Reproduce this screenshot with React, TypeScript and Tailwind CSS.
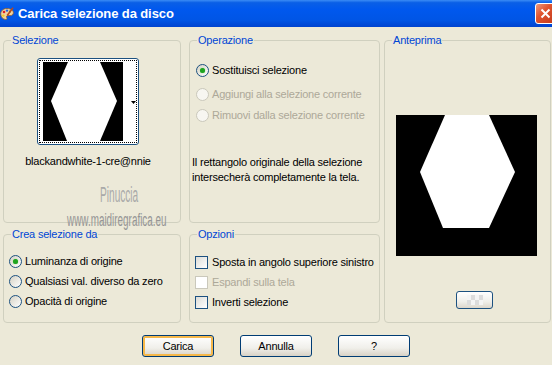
import type { ReactNode } from "react";

function Radio({ checked, disabled }: { checked?: boolean; disabled?: boolean }) {
  return (
    <span
      className={`w-[13px] h-[13px] shrink-0 rounded-full border flex items-center justify-center ${
        disabled ? "border-[#cac8bb] bg-[#f7f6f1]" : "border-[#1c5180] bg-[linear-gradient(135deg,#d6d2c4,#ffffff)]"
      }`}
    >
      {checked && <span className="w-[5px] h-[5px] rounded-full bg-[#1fa31f] shadow-[0_0_1px_#5bd35b]" />}
    </span>
  );
}

function Check({ disabled }: { disabled?: boolean }) {
  return (
    <span
      className={`w-[13px] h-[13px] shrink-0 border ${
        disabled ? "border-[#cac8bb] bg-white" : "border-[#1c5180] bg-[linear-gradient(135deg,#dcdcd7,#ffffff)]"
      }`}
    />
  );
}

function Group({ title, className, children }: { title: string; className: string; children?: ReactNode }) {
  return (
    <fieldset className={`border border-[#d0d0bf] rounded-[4px] min-w-0 ${className}`}>
      <legend className="ml-[7px] px-[1px] text-[#0046d5] leading-[13px]">{title}</legend>
      {children}
    </fieldset>
  );
}

function XpButton({ label, isDefault }: { label: string; isDefault?: boolean }) {
  return (
    <button
      className={`w-[72px] h-[22px] rounded-[3px] border border-[#003c74] bg-[linear-gradient(to_bottom,#ffffff,#f0efea_60%,#d8d2c6)] text-black leading-none ${
        isDefault ? "shadow-[inset_0_0_0_2px_#f6b84a]" : ""
      }`}
    >
      {label}
    </button>
  );
}

export default function App() {
  return (
    <div className="w-[552px] h-[365px] overflow-hidden bg-[#ece9d8] flex flex-col font-['Liberation_Sans',Tahoma,sans-serif] text-[11px] tracking-[-0.2px] whitespace-nowrap text-black">
      {/* title bar */}
      <div className="h-[27px] shrink-0 flex items-center bg-[linear-gradient(to_bottom,#3b8cf5_0%,#0a5fe6_10%,#0058ee_35%,#0055e5_75%,#0043cf_100%)]">
        <svg width="14" height="14" viewBox="0 0 14 14">
          <path d="M7 1.5C3.3 1.5.7 3.8.7 7c0 3 2.4 5.5 5 5.5 1.4 0 1.6-1.1 1-1.9-.6-.9 0-2 1.2-2h2.2c2 0 3.3-1.2 3.3-2.9C13.4 3.4 10.5 1.5 7 1.5z" fill="#f1d3a1" stroke="#8a5a2a" strokeWidth=".8" />
          <circle cx="4" cy="5" r="1.3" fill="#e02424" />
          <circle cx="7" cy="3.6" r="1.2" fill="#2462e0" />
          <circle cx="3.4" cy="8.6" r="1.2" fill="#f0cf1c" />
          <circle cx="10" cy="4.6" r="1.1" fill="#26a226" />
          <path d="M13 .8 7.2 8.6" stroke="#b8481a" strokeWidth="1.6" />
        </svg>
        <span className="ml-[4px] text-white font-bold text-[13px] tracking-[-0.1px]">Carica selezione da disco</span>
        <div className="ml-auto -mr-[4px] w-[21px] h-[21px] rounded-[3px] border border-white bg-[linear-gradient(135deg,#ec9a80,#e0542f_40%,#c2391b)] flex items-center justify-center">
          <svg width="11" height="11" viewBox="0 0 11 11">
            <path d="M1.5 1.5l8 8M9.5 1.5l-8 8" stroke="#fff" strokeWidth="2" />
          </svg>
        </div>
      </div>

      {/* body */}
      <div className="relative flex-1 pt-[7px] pl-[3px]">
        <div className="flex">
          <div className="flex flex-col gap-[5px] w-[178px]">
            <Group title="Selezione" className="h-[189px]">
              <div className="flex flex-col items-center pr-[8px]">
                <div className="mt-[11px] w-[102px] h-[87px] rounded-[3px] border border-[#1c5180] bg-white flex">
                  <div className="m-[1px] flex-1 border border-dotted border-black flex items-start pl-[3px] pt-[1px]">
                    <svg width="80" height="79" viewBox="0 0 80 79">
                      <rect width="80" height="79" fill="#000" />
                      <polygon points="25,0 57,0 74,39 57,79 24,79 8,39" fill="#fff" />
                    </svg>
                    <div className="flex-1 self-stretch flex items-center justify-end">
                      <svg width="5" height="3" viewBox="0 0 5 3">
                        <polygon points="0,0 5,0 2.5,3" fill="#000" />
                      </svg>
                    </div>
                  </div>
                </div>
                <div className="mt-[10px] leading-[13px]">blackandwhite-1-cre@nnie</div>
              </div>
            </Group>
            <Group title="Crea selezione da" className="h-[95px]">
              <div className="mt-[10px] flex flex-col pl-[5px]">
                <div className="h-[20px] flex items-center">
                  <Radio checked />
                  <span className="ml-[3px]">Luminanza di origine</span>
                </div>
                <div className="h-[20px] flex items-center">
                  <Radio />
                  <span className="ml-[3px]">Qualsiasi val. diverso da zero</span>
                </div>
                <div className="h-[20px] flex items-center">
                  <Radio />
                  <span className="ml-[3px]">Opacità di origine</span>
                </div>
              </div>
            </Group>
          </div>

          <div className="ml-[8px] flex flex-col gap-[5px] w-[191px]">
            <Group title="Operazione" className="h-[189px]">
              <div className="pl-[6px] flex flex-col">
                <div className="mt-[13px] h-[20px] flex items-center">
                  <Radio checked />
                  <span className="ml-[3px]">Sostituisci selezione</span>
                </div>
                <div className="mt-[4px] h-[20px] flex items-center text-[#aca899]">
                  <Radio disabled />
                  <span className="ml-[3px]">Aggiungi alla selezione corrente</span>
                </div>
                <div className="mt-[1px] h-[20px] flex items-center text-[#aca899]">
                  <Radio disabled />
                  <span className="ml-[3px]">Rimuovi dalla selezione corrente</span>
                </div>
              </div>
              <p className="mt-[30px] pl-[2px] leading-[15px]">
                Il rettangolo originale della selezione
                <br />
                intersecherà completamente la tela.
              </p>
            </Group>
            <Group title="Opzioni" className="h-[95px]">
              <div className="mt-[11px] flex flex-col pl-[5px]">
                <div className="h-[20px] flex items-center">
                  <Check />
                  <span className="ml-[4px]">Sposta in angolo superiore sinistro</span>
                </div>
                <div className="h-[20px] flex items-center text-[#aca899]">
                  <Check disabled />
                  <span className="ml-[4px]">Espandi sulla tela</span>
                </div>
                <div className="h-[20px] flex items-center">
                  <Check />
                  <span className="ml-[4px]">Inverti selezione</span>
                </div>
              </div>
            </Group>
          </div>

          <Group title="Anteprima" className="ml-[4px] w-[167px] h-[289px]">
            <div className="mt-[68px] ml-[11px]">
              <svg width="141" height="141" viewBox="0 0 141 141" className="block">
                <rect width="141" height="141" fill="#000" />
                <polygon points="49,0 93,0 119,57 93,113 47,113 24,57" fill="#fff" />
              </svg>
            </div>
            <div className="mt-[35px] ml-[71px] w-[37px] h-[18px] rounded-[3px] border border-[#1c5180] bg-[linear-gradient(to_bottom,#ffffff,#f0efea_60%,#dcd6cb)] flex items-center justify-center">
              <svg width="16" height="10" viewBox="0 0 16 10">
                <rect width="16" height="10" fill="#f4f4f4" />
                <rect x="4" y="0" width="4" height="5" fill="#dcdcdc" />
                <rect x="12" y="0" width="4" height="5" fill="#dcdcdc" />
                <rect x="0" y="5" width="4" height="5" fill="#dcdcdc" />
                <rect x="8" y="5" width="4" height="5" fill="#dcdcdc" />
              </svg>
            </div>
          </Group>
        </div>

        {/* buttons */}
        <div className="mt-[12px] -ml-[3px] flex justify-center gap-[26px]">
          <XpButton label="Carica" isDefault />
          <XpButton label="Annulla" />
          <XpButton label="?" />
        </div>

        {/* watermark */}
        <div className="absolute left-[100px] top-[157px] text-[22px] tracking-normal leading-none text-[#a9a9a9] scale-x-[0.46] origin-left pointer-events-none">
          Pinuccia
        </div>
        <div className="absolute left-[67px] top-[184px] text-[18px] tracking-normal leading-none text-[#959595] scale-x-[0.55] origin-left pointer-events-none">
          www.maidiregrafica.eu
        </div>
      </div>
    </div>
  );
}
